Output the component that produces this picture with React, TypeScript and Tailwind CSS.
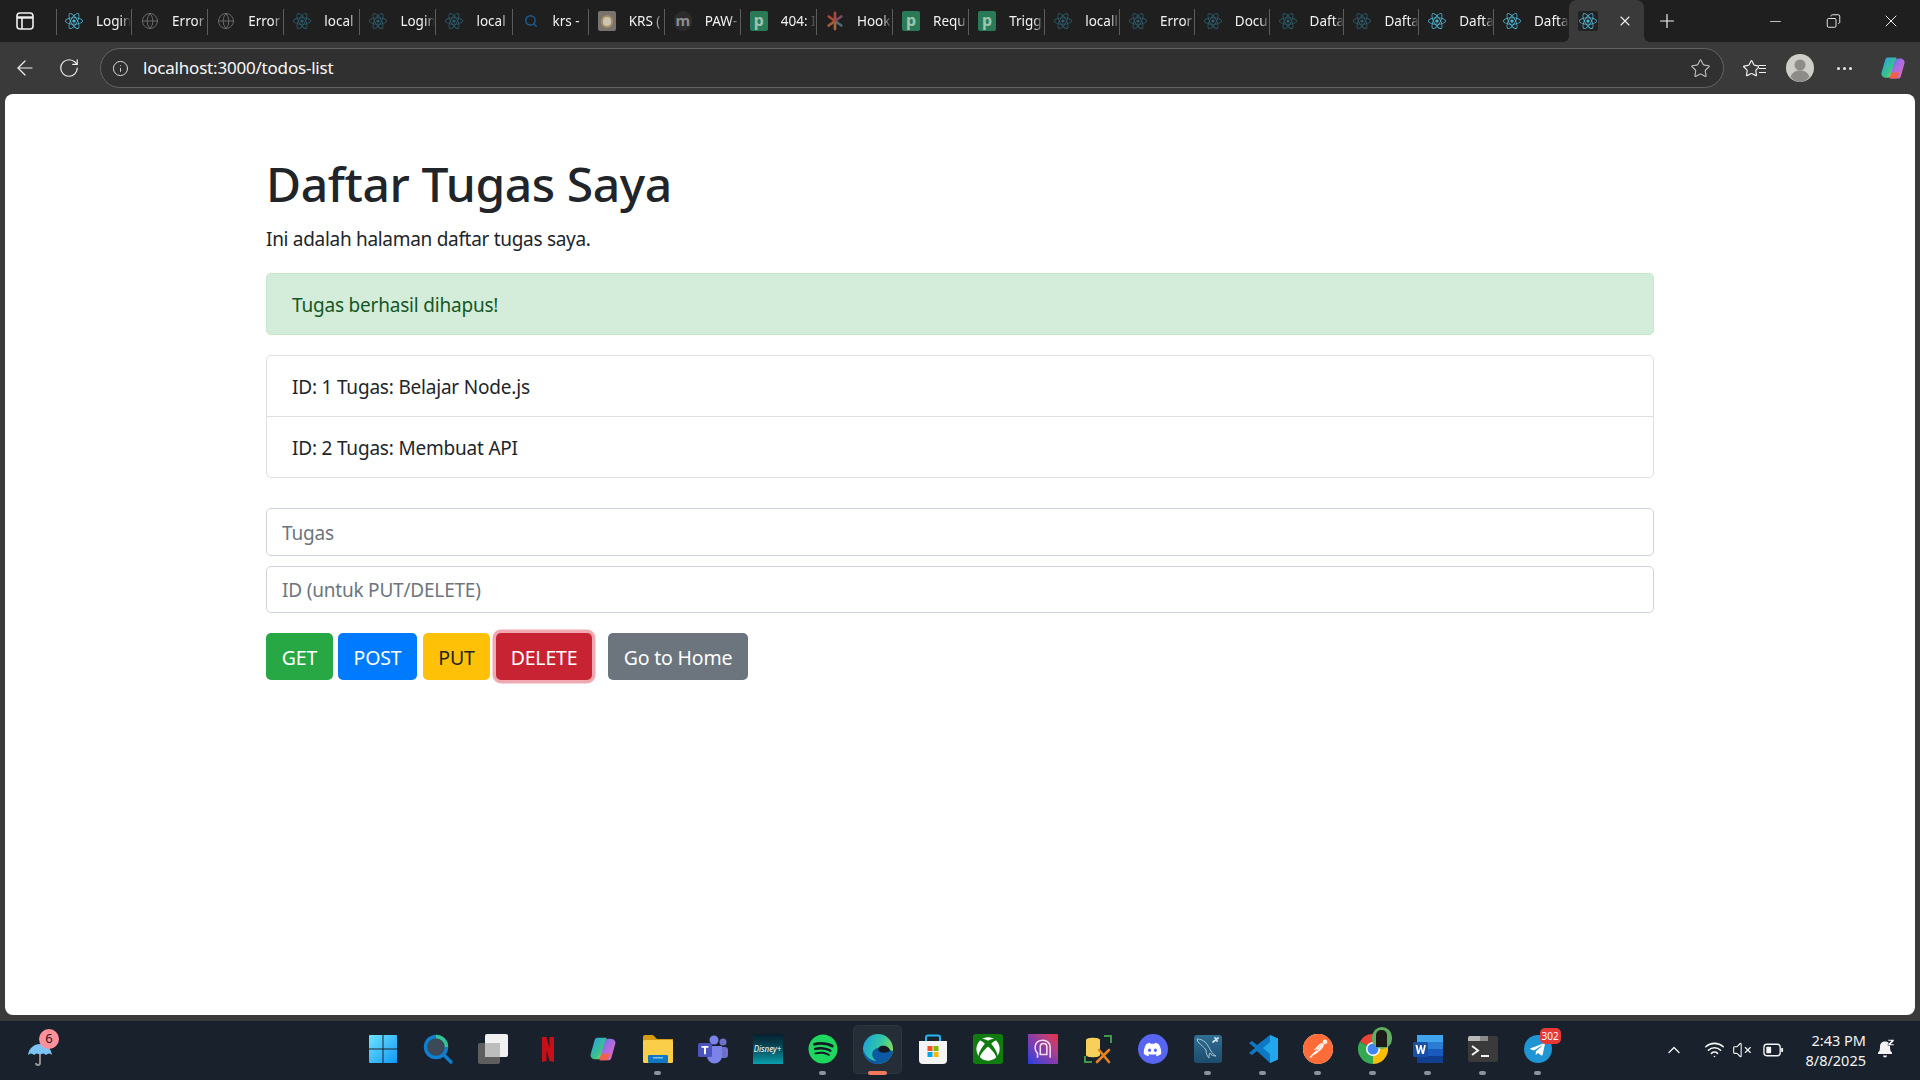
import type { ReactNode } from 'react';
import { ArrowLeft, RotateCw, Info, Star, Plus, X, Minus, Globe, Search, Copy, ChevronUp, Wifi, VolumeX } from 'lucide-react';
import { FaReact, FaSpotify, FaDiscord, FaXbox, FaTelegramPlane } from 'react-icons/fa';
import { SiPostman } from 'react-icons/si';

type TabInfo = { title: string; icon: ReactNode };

const bright = <FaReact className="w-[18px] h-[18px] text-[#4fb9d8]" />;
const dim = <FaReact className="w-[18px] h-[18px] text-[#2c6070]" />;
const globe = <Globe className="w-[20px] h-[20px] text-[#6f6f6f]" strokeWidth={1.2} />;
const pBadge = (
  <span className="w-[20px] h-[20px] rounded-[2px] bg-[#2b7a57] text-[#9dc5b0] flex items-center justify-center text-[16px] font-bold leading-none pb-[2px]">
    p
  </span>
);

const tabs: TabInfo[] = [
  { title: 'Login', icon: bright },
  { title: 'Error', icon: globe },
  { title: 'Error', icon: globe },
  { title: 'local', icon: dim },
  { title: 'Login', icon: dim },
  { title: 'local', icon: dim },
  { title: 'krs -', icon: <Search className="w-[14px] h-[14px] text-[#1c5b8f]" strokeWidth={2.5} /> },
  {
    title: 'KRS (',
    icon: (
      <span className="w-[20px] h-[20px] rounded-[2px] bg-[#77746f] flex items-center justify-center">
        <span className="w-[12px] h-[13px] rounded-full bg-[#c9c3b8] border-2 border-[#a98d5a]" />
      </span>
    ),
  },
  {
    title: 'PAW-',
    icon: (
      <span className="w-[20px] h-[20px] rounded-full bg-[#2c2c2c] text-[#8d8d8d] flex items-center justify-center text-[15px] font-bold leading-none pb-[2px]">
        m
      </span>
    ),
  },
  { title: '404: I', icon: pBadge },
  {
    title: 'Hook',
    icon: (
      <svg viewBox="0 0 20 20" className="w-[20px] h-[20px]" strokeWidth="3" strokeLinecap="round">
        <path d="M10 10V1" stroke="#a8483a" />
        <path d="M10 10l7-5" stroke="#7d4a63" />
        <path d="M10 10l7 5" stroke="#4b6b7e" />
        <path d="M10 10v9" stroke="#a0683a" />
        <path d="M10 10l-7 5" stroke="#a8603a" />
        <path d="M10 10L3 5" stroke="#a8483a" />
      </svg>
    ),
  },
  { title: 'Requ', icon: pBadge },
  { title: 'Trigg', icon: pBadge },
  { title: 'locall', icon: dim },
  { title: 'Error', icon: dim },
  { title: 'Docu', icon: dim },
  { title: 'Dafta', icon: dim },
  { title: 'Dafta', icon: dim },
  { title: 'Dafta', icon: bright },
  { title: 'Dafta', icon: bright },
];

function Tab({ tab, index }: { tab: TabInfo; index: number }) {
  return (
    <div className={`relative h-[42px] flex items-center shrink-0 ${index < 13 ? 'w-[76.1px]' : 'w-[74.8px]'}`}>
      <div className="w-[18px] ml-[9px] mr-[13px] flex items-center justify-center shrink-0">{tab.icon}</div>
      <span className="w-[35px] overflow-hidden whitespace-nowrap text-[13.5px] text-[#f2f2f2] [mask-image:linear-gradient(to_right,#000_70%,transparent)]">
        {tab.title}
      </span>
      {index < tabs.length - 1 && <span className="absolute right-0 top-[9px] h-[26px] w-px bg-[#5c5c5c]" />}
    </div>
  );
}

function TabStrip() {
  return (
    <div className="h-[42px] bg-[#1f1f1f] flex items-stretch shrink-0">
      <div className="w-[56px] flex items-center pl-[16px] shrink-0">
        <svg viewBox="0 0 18 18" className="w-[18px] h-[18px]" fill="none" stroke="#f0f0f0" strokeWidth="1.6">
          <rect x="1" y="1" width="16" height="16" rx="3" />
          <path d="M1 5.5h16" strokeWidth="2.4" />
          <path d="M6 5.5V17" />
        </svg>
      </div>
      <div className="flex relative">
        <span className="absolute left-0 top-[9px] h-[26px] w-px bg-[#5c5c5c]" />
        {tabs.map((tab, i) => (
          <Tab key={i} tab={tab} index={i} />
        ))}
      </div>
      {/* active tab */}
      <div className="relative w-[75.5px] h-[42px] bg-[#3a3a3a] rounded-t-[8px] flex items-center shrink-0">
        <span className="absolute -left-[6px] bottom-0 w-[6px] h-[6px] bg-[radial-gradient(circle_at_0_0,#1f1f1f_6px,#3a3a3a_6px)]" />
        <span className="absolute -right-[6px] bottom-0 w-[6px] h-[6px] bg-[radial-gradient(circle_at_100%_0,#1f1f1f_6px,#3a3a3a_6px)]" />
        <span className="ml-[9px] w-[20px] h-[20px] rounded-[2px] bg-[#222222] flex items-center justify-center">{bright}</span>
        <X className="ml-[19px] w-[16px] h-[16px] text-[#f2f2f2]" strokeWidth={1.6} />
      </div>
      <div className="ml-[12px] w-[22px] flex items-center justify-center">
        <Plus className="w-[22px] h-[22px] text-[#f2f2f2]" strokeWidth={1.3} />
      </div>
      <div className="ml-auto flex">
        <div className="w-[58px] flex items-center justify-center">
          <Minus className="w-[17px] h-[17px] text-[#f0f0f0]" strokeWidth={1.1} />
        </div>
        <div className="w-[58px] flex items-center justify-center">
          <Copy className="w-[15px] h-[16px] text-[#f0f0f0] -scale-x-100" strokeWidth={1.5} />
        </div>
        <div className="w-[58px] flex items-center justify-center">
          <X className="w-[20px] h-[20px] text-[#f0f0f0]" strokeWidth={1.2} />
        </div>
      </div>
    </div>
  );
}

function CopilotIcon({ size }: { size: number }) {
  return (
    <svg viewBox="0 0 32 32" width={size} height={size}>
      <defs>
        <linearGradient id="cpA" x1="0" y1="0" x2="1" y2="1">
          <stop offset="0" stopColor="#2f9cf0" />
          <stop offset="0.6" stopColor="#36c48a" />
          <stop offset="1" stopColor="#f4d03f" />
        </linearGradient>
        <linearGradient id="cpB" x1="0" y1="0" x2="1" y2="1">
          <stop offset="0" stopColor="#3f7df0" />
          <stop offset="0.5" stopColor="#b06be0" />
          <stop offset="1" stopColor="#f06ab0" />
        </linearGradient>
      </defs>
      <path d="M10 4h10l-6 20c-.6 2-2 3-4 3H8c-4 0-6-3-5-6l4-14c.5-2 1.500-3 3-3z" fill="url(#cpA)" />
      <path d="M22 28H12l6-20c.6-2 2-3 4-3h2c4 0 6 3 5 6l-4 14c-.5 2-1.500 3-3 3z" fill="url(#cpB)" />
      <path d="M12 27l3-6h8l-1.500 5c-.4 1-1 2-2.500 2h-6z" fill="#f2604a" />
    </svg>
  );
}

function Toolbar() {
  return (
    <div className="h-[52px] bg-[#3a3a3a] flex items-center pl-[5px] shrink-0">
      <div className="w-[40px] flex justify-center">
        <ArrowLeft className="w-[24px] h-[24px] text-[#f0f0f0]" strokeWidth={1.2} />
      </div>
      <div className="w-[48px] flex justify-center">
        <RotateCw className="w-[22px] h-[22px] text-[#f0f0f0]" strokeWidth={1.3} />
      </div>
      <div className="ml-[7px] w-[1624px] h-[40px] rounded-full border border-[#626262] bg-[#303030] flex items-center pl-[11px] pr-[12px]">
        <Info className="w-[17px] h-[17px] text-[#d8d8d8]" strokeWidth={1.4} />
        <span className="ml-[14px] text-[17px] tracking-[-0.2px] text-[#f8f8f8]">localhost:3000/todos-list</span>
        <Star className="ml-auto w-[21px] h-[21px] text-[#bdbdbd]" strokeWidth={1.3} />
      </div>
      <div className="ml-[8px] w-[45px] flex justify-center relative">
        <Star className="w-[19px] h-[19px] text-[#f0f0f0] -translate-x-[3px]" strokeWidth={1.5} />
        <span className="absolute right-[11px] top-[6px] w-[7px] h-[8px] bg-[#3a3a3a] border-y border-[#f0f0f0] flex items-center">
          <span className="w-full h-px bg-[#f0f0f0]" />
        </span>
      </div>
      <div className="w-[45px] flex justify-center">
        <svg viewBox="0 0 28 28" className="w-[28px] h-[28px]">
          <circle cx="14" cy="14" r="14" fill="#cfcdc8" />
          <circle cx="14" cy="11" r="5.500" fill="#8e8c88" />
          <path d="M4.500 23c1.500-4.500 5-6.500 9.500-6.500s8 2 9.500 6.500c-2.500 3-6 5-9.500 5s-7-2-9.500-5z" fill="#8e8c88" />
        </svg>
      </div>
      <div className="w-[45px] flex justify-center gap-[3px]">
        <span className="w-[3px] h-[3px] rounded-full bg-[#e8e8e8]" />
        <span className="w-[3px] h-[3px] rounded-full bg-[#e8e8e8]" />
        <span className="w-[3px] h-[3px] rounded-full bg-[#e8e8e8]" />
      </div>
      <div className="ml-[12px] w-[28px] flex justify-center">
        <CopilotIcon size={28} />
      </div>
    </div>
  );
}

const solidBtn = 'h-[47px] pt-[2px] rounded-[5px] text-[19.5px] whitespace-nowrap flex items-center justify-center';
const bodyText = 'text-[19px] tracking-[-0.2px]';

function Page() {
  return (
    <div className="flex-1 mx-[5px] bg-white rounded-[8px] pt-[60px] font-['Noto_Sans',sans-serif] text-[#212529]">
      <div className="w-[1388px] ml-[261px]">
        <h1 className="text-[48px] leading-[60px] font-medium tracking-[-0.4px] mb-[10px]">Daftar Tugas Saya</h1>
        <p className={`${bodyText} leading-[30px] mb-[19px] tracking-[-0.3px]`}>Ini adalah halaman daftar tugas saya.</p>
        <div className={`${bodyText} h-[62px] rounded-[5px] border border-[#c3e6cb] bg-[#d4edda] text-[#155724] px-[25px] pt-[2px] flex items-center mb-[20px]`}>
          Tugas berhasil dihapus!
        </div>
        <ul className="border border-[#dfdfdf] rounded-[5px] mb-[30px]">
          <li className={`${bodyText} h-[60.5px] px-[25px] pt-[2px] flex items-center border-b border-[#dfdfdf]`}>
            ID: 1 Tugas: Belajar Node.js
          </li>
          <li className={`${bodyText} h-[60.5px] px-[25px] pt-[2px] flex items-center`}>
            ID: 2 Tugas: Membuat API
          </li>
        </ul>
        <input
          placeholder="Tugas"
          className={`${bodyText} block w-full h-[47.500px] rounded-[5px] border border-[#ced4da] px-[15px] pt-[2px] placeholder:text-[#6c757d] mb-[10px] outline-none`}
        />
        <input
          placeholder="ID (untuk PUT/DELETE)"
          className={`${bodyText} block w-full h-[47.500px] rounded-[5px] border border-[#ced4da] px-[15px] pt-[2px] placeholder:text-[#6c757d] mb-[20px] outline-none`}
        />
        <div className="flex items-center tracking-[-0.2px]">
          <button className={`${solidBtn} w-[67px] bg-[#28a745] text-white`}>GET</button>
          <button className={`${solidBtn} w-[79px] ml-[5px] bg-[#007bff] text-white`}>POST</button>
          <button className={`${solidBtn} w-[67px] ml-[6px] bg-[#ffc107] text-[#212529]`}>PUT</button>
          <button className={`${solidBtn} w-[96px] ml-[6px] bg-[#c82333] text-white shadow-[0_0_0_3.5px_rgba(225,83,97,0.5)]`}>DELETE</button>
          <button className={`${solidBtn} w-[140px] ml-[16px] bg-[#6c757d] text-white`}>Go to Home</button>
        </div>
      </div>
    </div>
  );
}

const taskIcons: { key: string; node: ReactNode; mark?: boolean }[] = [
  {
    key: 'win',
    node: (
      <svg viewBox="0 0 30 30" className="w-[30px] h-[30px]">
        <defs>
          <linearGradient id="winG" x1="0" y1="0" x2="1" y2="1">
            <stop offset="0" stopColor="#6fe3ff" />
            <stop offset="1" stopColor="#0f98f5" />
          </linearGradient>
        </defs>
        <path d="M1 2a1 1 0 011-1h12.500v13.500H1zM15.500 1H28a1 1 0 011 1v12.500H15.500zM1 15.500h13.500V29H2a1 1 0 01-1-1zM15.500 15.500H29V28a1 1 0 01-1 1H15.500z" fill="url(#winG)" />
      </svg>
    ),
  },
  {
    key: 'search',
    node: (
      <svg viewBox="0 0 30 30" className="w-[30px] h-[30px]" fill="none">
        <circle cx="13" cy="13" r="10.500" fill="#3c4a58" stroke="#0f7fd0" strokeWidth="3.400" />
        <path d="M13 2.500a10.500 10.500 0 0110.500 10.500" stroke="#35c48d" strokeWidth="3.400" />
        <path d="M21 21l7 7" stroke="#0f7fd0" strokeWidth="3.400" strokeLinecap="round" />
      </svg>
    ),
  },
  {
    key: 'taskview',
    node: (
      <svg viewBox="0 0 30 30" className="w-[30px] h-[30px]">
        <rect x="0" y="9" width="22" height="21" rx="2" fill="#5e5e5e" />
        <rect x="7" y="0" width="23" height="23" rx="2" fill="#f1f1f1" />
        <rect x="7" y="9" width="15" height="14" fill="#bdbdbd" />
      </svg>
    ),
  },
  {
    key: 'netflix',
    node: (
      <svg viewBox="0 0 30 30" className="w-[30px] h-[30px]">
        <path d="M9 3h4.500l3 11V3H21v25l-4.500-1-3-11v11L9 28z" fill="#c80f17" />
      </svg>
    ),
  },
  { key: 'copilot', node: <CopilotIcon size={30} /> },
  {
    key: 'explorer',
    mark: true,
    node: (
      <svg viewBox="0 0 30 30" className="w-[30px] h-[30px]">
        <path d="M0 3a2 2 0 012-2h8l4 4h16v4H0z" fill="#d79c14" />
        <rect x="0" y="6" width="30" height="23" rx="1.500" fill="#fbce4a" />
        <rect x="5" y="21" width="20" height="8" rx="1" fill="#0f78c4" />
        <rect x="10" y="23" width="10" height="1.500" fill="#7cc4ee" />
      </svg>
    ),
  },
  {
    key: 'teams',
    node: (
      <svg viewBox="0 0 30 30" className="w-[30px] h-[30px]">
        <circle cx="25" cy="8" r="3.500" fill="#6d70c6" />
        <circle cx="16" cy="6" r="4.500" fill="#7b83eb" />
        <rect x="21" y="13" width="9" height="11" rx="3" fill="#6d70c6" />
        <path d="M9 12h15v10a7.500 7.500 0 01-15 0z" fill="#7b83eb" />
        <rect x="0" y="9" width="14" height="14" rx="1.500" fill="#4b53bc" />
        <path d="M3.500 12h7v1.800H8v6.500H6v-6.500H3.500z" fill="#fff" />
      </svg>
    ),
  },
  {
    key: 'disney',
    node: (
      <span className="w-[30px] h-[30px] bg-gradient-to-b from-[#06202f] via-[#06505f] to-[#0aa0ad] flex items-center justify-center text-[8px] italic text-white leading-none">
        Disney+
      </span>
    ),
  },
  {
    key: 'spotify',
    mark: true,
    node: (
      <span className="w-[30px] h-[30px] rounded-full bg-[#131a22] flex items-center justify-center">
        <FaSpotify className="w-[30px] h-[30px] text-[#1ed760]" />
      </span>
    ),
  },
  {
    key: 'edge',
    node: (
      <svg viewBox="0 0 30 30" className="w-[30px] h-[30px]">
        <defs>
          <linearGradient id="edgeG" x1="0" y1="0" x2="1" y2="0.400">
            <stop offset="0" stopColor="#1b9de2" />
            <stop offset="0.6" stopColor="#30c6a8" />
            <stop offset="1" stopColor="#7fdc5c" />
          </linearGradient>
        </defs>
        <circle cx="15" cy="15" r="15" fill="url(#edgeG)" />
        <path d="M30 17c-1 8-8 13-15 13C6 30 0 23 0 15c2 8 8 12 14 12-4-2-6-6-4-10 2-3 6-4 10-3 4 1 6 2 10 3z" fill="#0c59a4" />
        <path d="M17 18c3 1 7 1 10-1 0-4-5-6-9-5-3 1-4 4-1 6z" fill="#131a22" />
      </svg>
    ),
  },
  {
    key: 'store',
    node: (
      <svg viewBox="0 0 30 30" className="w-[30px] h-[30px]">
        <path d="M8 7V3.500A2 2 0 0110 1.500h10a2 2 0 012 2V7" fill="none" stroke="#22b8f0" strokeWidth="2" />
        <path d="M1 7h28v19a4 4 0 01-4 4H5a4 4 0 01-4-4z" fill="#f4f4f4" />
        <rect x="9.500" y="12" width="5" height="5" fill="#f25022" />
        <rect x="15.500" y="12" width="5" height="5" fill="#7fba00" />
        <rect x="9.500" y="18" width="5" height="5" fill="#00a4ef" />
        <rect x="15.500" y="18" width="5" height="5" fill="#ffb900" />
      </svg>
    ),
  },
  {
    key: 'xbox',
    node: (
      <span className="w-[30px] h-[30px] rounded-[3px] bg-[#107c10] flex items-center justify-center">
        <FaXbox className="w-[24px] h-[24px] text-white" />
      </span>
    ),
  },
  {
    key: 'head',
    node: (
      <span className="w-[30px] h-[30px] bg-gradient-to-tr from-[#1c39e0] via-[#8a3aa8] to-[#f0233c] flex items-center justify-center">
        <svg viewBox="0 0 20 20" className="w-[22px] h-[22px]" fill="none" stroke="#f0dff0" strokeWidth="1.400">
          <path d="M5 18v-4C3 12 2.500 10 3 7c.6-3 3.500-5 7-5s6.500 2.500 6.500 6v10" />
          <path d="M7.500 15V8a3 3 0 016 0v7z" />
        </svg>
      </span>
    ),
  },
  {
    key: 'dbtool',
    node: (
      <svg viewBox="0 0 30 30" className="w-[30px] h-[30px]" fill="none">
        <path d="M3 6c0-3 14-3 14 0v15c0 3-14 3-14 0z" fill="#f6d05a" />
        <path d="M21 2h7v7M2 22v6h7" stroke="#3e9a45" strokeWidth="2" />
        <path d="M14 28l12-12M16 16l10 12" stroke="#e8831f" strokeWidth="2.600" strokeLinecap="round" />
      </svg>
    ),
  },
  {
    key: 'discord',
    node: (
      <span className="w-[30px] h-[30px] rounded-full bg-[#5865f2] flex items-center justify-center">
        <FaDiscord className="w-[19px] h-[19px] text-white" />
      </span>
    ),
  },
  {
    key: 'mysql',
    mark: true,
    node: (
      <svg viewBox="0 0 28 28" className="w-[28px] h-[28px]" fill="none">
        <defs>
          <linearGradient id="sqlG" x1="0" y1="0" x2="0" y2="1">
            <stop offset="0" stopColor="#2f6f92" />
            <stop offset="1" stopColor="#1d4c6c" />
          </linearGradient>
        </defs>
        <rect width="28" height="28" rx="3" fill="url(#sqlG)" />
        <path d="M3 4c3 0 6 1 8 3 3 3 4 6 6 9 1 2 3 4 5 5-3 0-5-1-6-3-1 1-1 3-1 5-2-2-3-5-3-8-2-3-5-5-8-8z" stroke="#a9c6d8" strokeWidth="1" />
        <path d="M19 7l5-4M21 3l2 3" stroke="#d6e4ec" strokeWidth="1.800" strokeLinecap="round" />
      </svg>
    ),
  },
  {
    key: 'vscode',
    mark: true,
    node: (
      <svg viewBox="0 0 30 30" className="w-[30px] h-[30px]">
        <path d="M22 1l8 3.500v21L22 29 9 17l-5 4-3-2 6-5-6-5 3-2 5 4z" fill="#0f78c4" />
        <path d="M22 1l8 3.500v21L22 29V20l-7-6 7-6z" fill="#22a6ee" />
      </svg>
    ),
  },
  {
    key: 'postman',
    mark: true,
    node: (
      <span className="w-[30px] h-[30px] rounded-full bg-white flex items-center justify-center">
        <SiPostman className="w-[30px] h-[30px] text-[#ff6c37]" />
      </span>
    ),
  },
  {
    key: 'chrome',
    mark: true,
    node: (
      <span className="relative w-[30px] h-[30px]">
        <svg viewBox="0 0 30 30" className="w-[30px] h-[30px]">
          <path d="M15 15L2 7.500A15 15 0 0128 7.500z" fill="#ea4335" />
          <path d="M15 15L28 7.500A15 15 0 0115 30z" fill="#fbbc04" />
          <path d="M15 15L15 30A15 15 0 012 7.500z" fill="#34a853" />
          <circle cx="15" cy="15" r="7" fill="#fff" />
          <circle cx="15" cy="15" r="5.500" fill="#4285f4" />
        </svg>
        <span className="absolute -top-[7px] left-[14px] w-[20px] h-[22px] rounded-full bg-[#5fae62] flex items-center justify-center">
          <span className="w-[11px] h-[17px] rounded-t-[5px] bg-[#1d1a1a]" />
        </span>
      </span>
    ),
  },
  {
    key: 'word',
    mark: true,
    node: (
      <svg viewBox="0 0 30 30" className="w-[30px] h-[30px]">
        <rect x="4" y="1" width="26" height="28" rx="1.500" fill="#2b7cd3" />
        <rect x="4" y="1" width="26" height="7" fill="#41a5ee" />
        <rect x="4" y="15" width="26" height="7" fill="#185abd" />
        <rect x="4" y="22" width="26" height="7" fill="#103f91" />
        <rect x="0" y="8" width="15" height="15" rx="1.500" fill="#1a4fa8" />
        <path d="M2.500 11h2l1.200 6 1.400-6h1.400l1.400 6 1.200-6h1.800l-2 9H9L7.600 14.500 6.200 20H4.500z" fill="#fff" />
      </svg>
    ),
  },
  {
    key: 'terminal',
    mark: true,
    node: (
      <svg viewBox="0 0 30 26" className="w-[30px] h-[26px]" fill="none">
        <rect width="30" height="26" rx="2" fill="#3a3a3a" />
        <path d="M0 2a2 2 0 012-2h10v5H0z" fill="#b8b8b8" />
        <path d="M12 0h8v5h-8z" fill="#8a8a8a" />
        <path d="M4 10l6 4.500L4 19" stroke="#f2f2f2" strokeWidth="2" />
        <path d="M13 20h8" stroke="#f2f2f2" strokeWidth="2" />
      </svg>
    ),
  },
  {
    key: 'telegram',
    mark: true,
    node: (
      <span className="relative w-[28px] h-[28px] rounded-full bg-[#1f96d3] flex items-center justify-center">
        <FaTelegramPlane className="w-[17px] h-[17px] text-white" />
        <span className="absolute -top-[7px] left-[16px] h-[16px] px-[2px] rounded-[5px] bg-[#e53935] text-white text-[10px] leading-[16px]">
          302
        </span>
      </span>
    ),
  },
];

function Taskbar() {
  return (
    <div className="relative h-[59px] mt-[6px] bg-[#19222c] shrink-0 flex justify-center font-['Noto_Sans',sans-serif]">
      {/* weather */}
      <div className="absolute left-[27px] top-[13px] w-[28px] h-[32px]">
        <svg viewBox="0 0 26 26" className="w-[26px] h-[26px] mt-[6px]">
          <path d="M1 15C2 8 7 4 13 4s11 4 12 11c-2-2-4-2-6 0-2-2-4-2-6 0-2-2-4-2-6 0-2-2-4-2-6 0z" fill="#7cc4f6" />
          <path d="M13 14v9a2 2 0 01-4 0" fill="none" stroke="#9a9a9a" strokeWidth="1.800" />
        </svg>
        <span className="absolute left-[12px] -top-[5px] w-[20px] h-[20px] rounded-full bg-[#ff8f9a] text-[#1a1a1a] text-[13px] flex items-center justify-center">
          6
        </span>
      </div>

      {/* pinned apps */}
      <div className="flex">
        {taskIcons.map((item) => (
          <div key={item.key} className="relative w-[55px] h-[59px] flex items-center justify-center pb-[1px]">
            {item.key === 'edge' && (
              <span className="absolute left-[3px] top-[4px] w-[49px] h-[49px] rounded-[5px] bg-[#252d37] border border-[#2d3540]" />
            )}
            <span className="relative flex items-center justify-center -translate-y-[1px]">{item.node}</span>
            {item.mark && <span className="absolute left-[24px] top-[50px] w-[7px] h-[4px] rounded-full bg-[#8d9299]" />}
            {item.key === 'edge' && (
              <span className="absolute left-[18px] top-[50px] w-[19px] h-[4px] rounded-full bg-[#f0785f]" />
            )}
          </div>
        ))}
      </div>

      {/* system tray */}
      <div className="absolute right-0 top-0 h-[59px] w-[265px] text-[#f4f4f4]">
        <div className="absolute left-[10px] top-0 h-[59px] flex items-center">
          <ChevronUp className="ml-[-1px] w-[20px] h-[20px] -translate-y-[1px]" strokeWidth={1.6} />
          <Wifi className="ml-[20px] w-[21px] h-[21px] -translate-y-[1px]" strokeWidth={1.8} />
          <VolumeX className="ml-[7px] w-[20px] h-[20px] -translate-y-[1px]" strokeWidth={1.3} />
          <svg viewBox="0 0 22 14" className="ml-[11px] w-[21px] h-[14px] -translate-y-[1px]" fill="none">
            <rect x="1" y="1" width="17" height="12" rx="3" stroke="#f4f4f4" strokeWidth="1.400" />
            <rect x="3.500" y="3.500" width="5" height="7" rx="1" fill="#f4f4f4" />
            <path d="M20 5v4" stroke="#f4f4f4" strokeWidth="2" />
          </svg>
        </div>
        <div className="absolute right-[54px] top-[9px] text-right text-[14.5px] leading-[20px]">
          <div>2:43 PM</div>
          <div>8/8/2025</div>
        </div>
        <svg viewBox="0 0 20 20" className="absolute right-[24px] top-[17px] w-[20px] h-[21px]" fill="#f4f4f4">
          <path d="M2 14c1.500-1 2-2.500 2-6 0-3 2-5 5-5s5 2 5 5c0 3.500.5 5 2 6v1.500H2z" />
          <path d="M7 17h4a2 2 0 01-4 0z" />
          <path d="M12 1h6v1.500l-3 3h3V7h-6V5.500l3-3h-3z" stroke="#19222c" strokeWidth="0.500" />
        </svg>
      </div>
    </div>
  );
}

export default function App() {
  return (
    <div className="w-[1920px] h-[1080px] bg-[#3a3a3a] flex flex-col overflow-hidden font-['Noto_Sans',sans-serif]">
      <TabStrip />
      <Toolbar />
      <Page />
      <Taskbar />
    </div>
  );
}
